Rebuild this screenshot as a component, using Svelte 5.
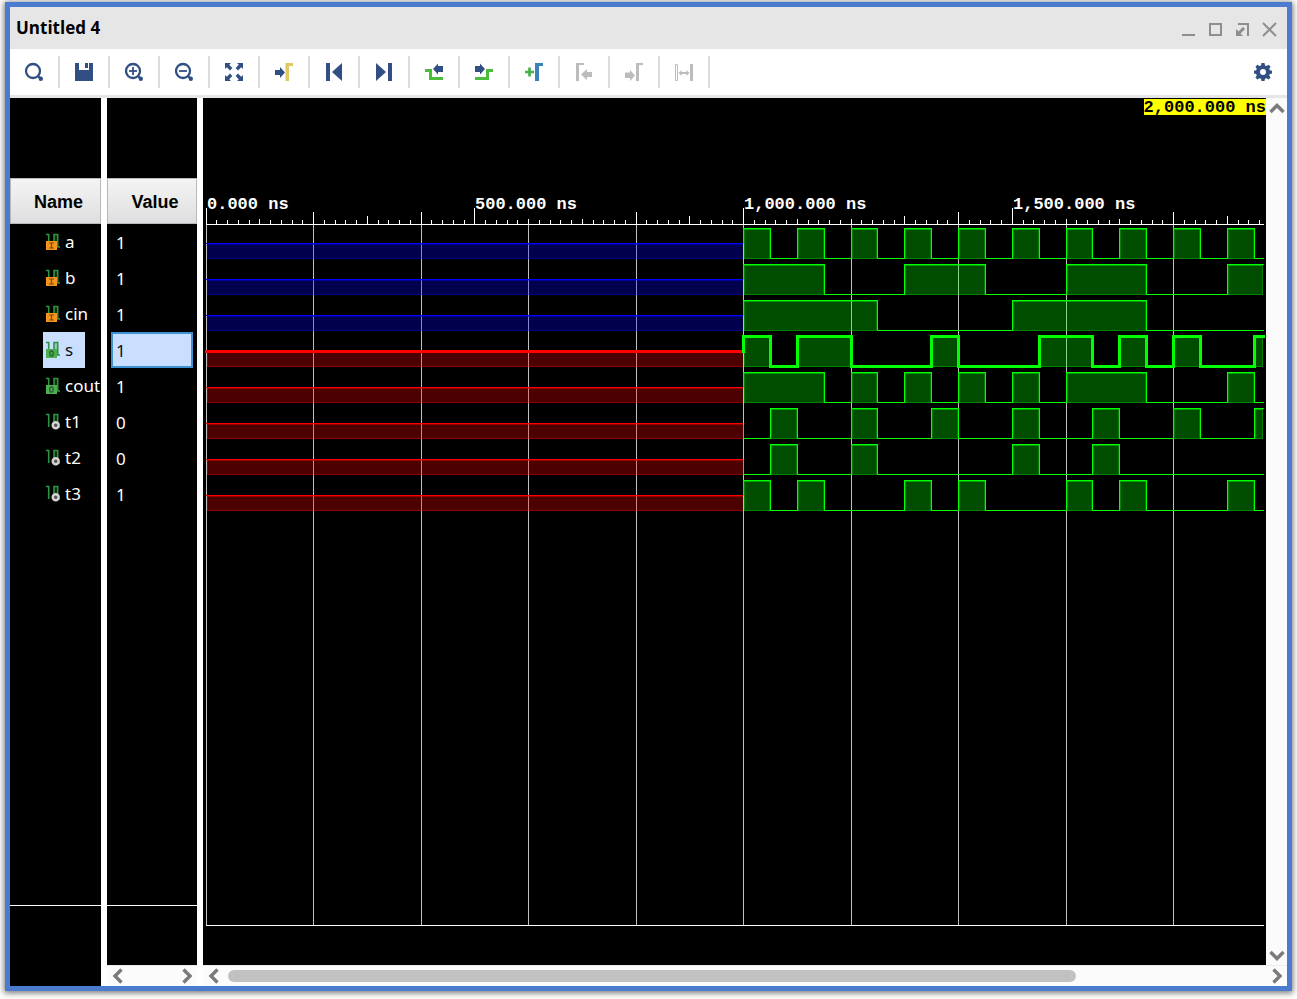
<script>
  const tools = [
    ['search', 'Search'],
    ['save', 'Save waveform'],
    ['zoomin', 'Zoom in'],
    ['zoomout', 'Zoom out'],
    ['fit', 'Zoom fit'],
    ['cursor', 'Go to cursor'],
    ['first', 'Go to time 0'],
    ['last', 'Go to last time'],
    ['prev', 'Previous transition'],
    ['next', 'Next transition'],
    ['marker', 'Add marker'],
    ['prevmark', 'Previous marker'],
    ['nextmark', 'Next marker'],
    ['swap', 'Swap cursors'],
  ];
  const disabled = ['prevmark', 'nextmark', 'swap'];

  // "highs" lists the [from, to) slots, 50 ns each, counted from 1,000 ns
  const signals = [
    { name: 'a', value: 1, kind: 'in', start: 'z', highs: [[0, 1], [2, 3], [4, 5], [6, 7], [8, 9], [10, 11], [12, 13], [14, 15], [16, 17], [18, 19]] },
    { name: 'b', value: 1, kind: 'in', start: 'z', highs: [[0, 3], [6, 9], [12, 15], [18, 20]] },
    { name: 'cin', value: 1, kind: 'in', start: 'z', highs: [[0, 5], [10, 15]] },
    { name: 's', value: 1, kind: 'out', start: 'x', highs: [[0, 1], [2, 4], [7, 8], [11, 13], [14, 15], [16, 17], [19, 20]] },
    { name: 'cout', value: 1, kind: 'out', start: 'x', highs: [[0, 3], [4, 5], [6, 7], [8, 9], [10, 11], [12, 15], [18, 19]] },
    { name: 't1', value: 0, kind: 'net', start: 'x', highs: [[1, 2], [4, 5], [7, 8], [10, 11], [13, 14], [16, 17], [19, 20]] },
    { name: 't2', value: 0, kind: 'net', start: 'x', highs: [[1, 2], [4, 5], [10, 11], [13, 14]] },
    { name: 't3', value: 1, kind: 'net', start: 'x', highs: [[0, 1], [2, 3], [6, 7], [8, 9], [12, 13], [14, 15], [18, 19]] },
  ];

  let selected = $state('s');
  let width = $state(1063);

  const ROW = 36;
  const AXIS = 126;
  const px = (ns) => 3 + Math.floor(ns * 0.5375);
  const end = $derived(width - 3);
  const lastNs = $derived((end - 3) / 0.5375);
  const range = (step) => Array.from({ length: Math.floor(lastNs / step) + 1 }, (_, i) => i * step);

  const TALL = [200, 400, 800, 1400, 1800];
  const MEDIUM = [300, 900, 1300, 1900];
  function tickHeight(ns) {
    if (ns % 500 === 0) return 16;
    if (TALL.includes(ns)) return 12;
    if (MEDIUM.includes(ns)) return 8;
    return 5;
  }

  function trace(highs, top) {
    const low = top + 34;
    const high = top + 4;
    let d = `M${px(1000)} ${top + 19}V${highs[0][0] === 0 ? high : low}`;
    for (const [from, to] of highs) {
      const x1 = px(1000 + from * 50);
      const x2 = px(1000 + to * 50);
      if (x1 > end) break;
      if (from > 0) d += `H${x1}V${high}`;
      if (x2 > end) return d + `H${end}`;
      d += `H${x2}V${low}`;
    }
    return d + `H${end}`;
  }

  const boxes = (highs) =>
    highs
      .map(([from, to]) => [px(1000 + from * 50) + 1, Math.min(px(1000 + to * 50), end)])
      .filter(([x1, x2]) => x2 > x1)
      .map(([x1, x2]) => ({ x: x1, w: x2 - x1 }));
</script>

{#snippet icon(name)}
  <svg width="20" height="20" viewBox="0 0 20 20" fill="none" aria-hidden="true">
    {#if name === 'search' || name === 'zoomin' || name === 'zoomout'}
      <circle cx="9" cy="9" r="7" stroke="#324f84" stroke-width="2.300" />
      <path d="M14 14l2 2" stroke="#324f84" stroke-width="2.400" />
      <circle cx="16.800" cy="16.800" r="2.200" fill="#324f84" />
      {#if name !== 'search'}<path d="M5 9h8" stroke="#324f84" stroke-width="1.800" />{/if}
      {#if name === 'zoomin'}<path d="M9 5v8" stroke="#324f84" stroke-width="1.800" />{/if}
    {:else if name === 'save'}
      <path d="M1 1h4v7h10V1h4v18H1zM11 1h3v5h-3z" fill="#324f84" />
    {:else if name === 'fit'}
      <path d="M1 1h6L5.200 2.800 8.400 6 6 8.400 2.800 5.200 1 7zM19 1v6l-1.800-1.800L14 8.400 11.600 6l3.200-3.200L13 1zM1 19v-6l1.800 1.800L6 11.600 8.400 14l-3.200 3.200L7 19zM19 19h-6l1.800-1.800-3.200-3.200 2.400-2.400 3.200 3.200L19 13z" fill="#324f84" />
    {:else if name === 'cursor'}
      <path d="M1 8h5V5l5 5.500L6 16v-3H1z" fill="#324f84" />
      <path d="M11.500 1H19v3h-4v15h-3.500z" fill="#e0c862" />
    {:else if name === 'first'}
      <path d="M2 1h4v18H2zM18 1v18L8 10z" fill="#324f84" />
    {:else if name === 'last'}
      <path d="M14 1h4v18h-4zM2 1v18l10-9z" fill="#324f84" />
    {:else if name === 'prev'}
      <path d="M1 8.500h5.500v8H19" stroke="#4cbc3c" stroke-width="3" />
      <path d="M19 4h-5V1.500L9 7l5 5.500V10h5z" fill="#324f84" />
    {:else if name === 'next'}
      <path d="M1 16.500h12.500v-8H19" stroke="#4cbc3c" stroke-width="3" />
      <path d="M1 4h5V1.500L11 7l-5 5.500V10H1z" fill="#324f84" />
    {:else if name === 'marker'}
      <path d="M1 10h9M5.500 5.500v9" stroke="#42ad49" stroke-width="2.600" />
      <path d="M11 1h8v3h-4v15h-4z" fill="#3983b5" />
    {:else if name === 'prevmark'}
      <path d="M2 1h8v2H5v16H2zM18 10h-5V7l-6 5.500 6 5.500v-3h5z" fill="#bcbcbc" />
    {:else if name === 'nextmark'}
      <path d="M12 1h7v2h-4v16h-3zM1 10.500h5V8l5 5.500L6 19v-3H1z" fill="#bcbcbc" />
    {:else if name === 'swap'}
      <path d="M1.500 2.500h2v16h-2z" stroke="#bcbcbc" />
      <path d="M16 2h3v17h-3zM4.500 11l3-3v2h5V8l3 3-3 3v-2h-5v2z" fill="#bcbcbc" />
    {:else if name === 'gear'}
      <path fill-rule="evenodd" d="M8.500 1h3l.5 2.500 1.500.6L15.600 2.700l2 2-1.400 2.100.6 1.500 2.200.4v2.800l-2.200.5-.6 1.500 1.400 2.100-2 2-2.100-1.400-1.500.6L11.500 19h-3L8 16.800l-1.500-.6-2.100 1.400-2-2 1.400-2.100-.6-1.500L1 11.500V8.700l2.200-.4.6-1.500L2.400 4.700l2-2 2.100 1.400L8 3.500zM10 7a3 3 0 1 0 0 6 3 3 0 0 0 0-6z" fill="#324f84" />
    {/if}
  </svg>
{/snippet}

{#snippet kindIcon(kind)}
  <svg width="16" height="18" viewBox="0 0 16 18" fill="none" aria-hidden="true">
    <path d="M9 2h4v12H9z" fill="#2c9440" fill-opacity=".3" />
    <path d="M1 1.500h2.700V14M9 14V1.500h3.700V14H15" stroke="#2c9440" stroke-width="1.600" />
    {#if kind === 'net'}
      <circle cx="10.700" cy="12.300" r="3" stroke="#d4d4d4" stroke-width="2.400" fill="#555" />
    {:else}
      <path d="M1 8h11v9H1z" fill={kind === 'in' ? '#f7941d' : '#4cae4f'} />
      {#if kind === 'in'}
        <path d="M4 10h5M4 15h5M6.500 10v5" stroke="#704a1c" stroke-width="1.200" />
      {:else}
        <ellipse cx="6.500" cy="12.500" rx="1.700" ry="2.600" stroke="#245c2b" stroke-width="1.200" />
      {/if}
    {/if}
  </svg>
{/snippet}

{#snippet chevron(dir)}
  <svg width="16" height="16" viewBox="0 0 16 16" fill="none" stroke="#7a7a7a" stroke-width="3.400" aria-hidden="true">
    {#if dir === 'left'}<path d="M11.500 1.500L5 8l6.500 6.500" />
    {:else if dir === 'right'}<path d="M4.500 1.500L11 8l-6.500 6.500" />
    {:else if dir === 'up'}<path d="M1.500 11L8 4.500l6.500 6.500" />
    {:else}<path d="M1.500 5L8 11.500 14.500 5" />{/if}
  </svg>
{/snippet}

<main class="window">
  <header class="titlebar">
    <h1>Untitled 4</h1>
    <div class="controls">
      <button aria-label="Minimize"><svg width="15" height="15" fill="none" stroke="#8e8e8e" stroke-width="2"><path d="M1 13h13" /></svg></button>
      <button aria-label="Maximize"><svg width="15" height="15" fill="none" stroke="#8e8e8e" stroke-width="2"><path d="M2 2h11v11H2z" /></svg></button>
      <button aria-label="Float"><svg width="15" height="15" fill="none" stroke="#8e8e8e" stroke-width="2"><path d="M3 2h10v12" /><path d="M9 6l-5 5" stroke-width="3" /><path d="M1 7v7h7z" fill="#8e8e8e" stroke="none" /></svg></button>
      <button aria-label="Close"><svg width="15" height="15" fill="none" stroke="#8e8e8e" stroke-width="2"><path d="M1 1l13 13M14 1L1 14" /></svg></button>
    </div>
  </header>

  <div class="toolbar">
    {#each tools as [id, label]}
      <button class="tool" aria-label={label} title={label} disabled={disabled.includes(id)}>{@render icon(id)}</button>
    {/each}
    <button class="settings" aria-label="Settings">{@render icon('gear')}</button>
  </div>

  <div class="panes">
    <section class="pane names">
      <table>
        <thead><tr><th>Name</th></tr></thead>
        <tbody>
          {#each signals as s}
            <tr>
              <td>
                <button class="signal" class:selected={selected === s.name} onclick={() => (selected = s.name)}>
                  {@render kindIcon(s.kind)}<span>{s.name}</span>
                </button>
              </td>
            </tr>
          {/each}
        </tbody>
      </table>
      <div class="foot tall"></div>
    </section>

    <section class="pane values">
      <table>
        <thead><tr><th>Value</th></tr></thead>
        <tbody>
          {#each signals as s}
            <tr><td><div class="value" class:selected={selected === s.name}>{s.value}</div></td></tr>
          {/each}
        </tbody>
      </table>
      <div class="foot"></div>
      <div class="hscroll">
        <button aria-label="Scroll values left">{@render chevron('left')}</button>
        <span class="track"></span>
        <button aria-label="Scroll values right">{@render chevron('right')}</button>
      </div>
    </section>

    <section class="waves">
      <div class="view">
        <div class="canvas" bind:clientWidth={width}>
          <svg width="100%" height="828" shape-rendering="crispEdges" role="img" aria-label="Signal waveforms">
            {#each range(200) as ns}
              <rect x={px(ns)} y={AXIS} width="1" height="701" fill="#c0c0c0" />
            {/each}
            {#each range(20) as ns}
              <rect x={px(ns)} y={AXIS - 4} width="1" height="4" fill="#fff" />
            {/each}
            {#each range(100) as ns}
              <rect x={px(ns)} y={AXIS - tickHeight(ns)} width="1" height={tickHeight(ns)} fill="#fff" />
            {/each}
            <rect x="3" y={AXIS} width={end - 2} height="1" fill="#fff" />
            <rect x="3" y="827" width={end - 2} height="1" fill="#fff" />

            {#each signals as s, i}
              {@const top = AXIS + i * ROW}
              {@const tone = s.start === 'z' ? '#00f' : '#f00'}
              {@const bold = selected === s.name}
              <rect x="4" y={top + 19} width="536" height="16" fill={tone} fill-opacity=".3" />
              <rect x="4" y={top + 20} width="536" height="1" fill={tone} fill-opacity=".4" />
              <path d={`M4.500 ${top + 20}v14.500H540`} stroke={tone} stroke-opacity=".35" fill="none" />
              <rect x={bold ? 2 : 3} y={bold ? top + 18 : top + 19} width={bold ? 538 : 537} height={bold ? 3 : 1} fill={tone} />
              {#each boxes(s.highs) as b}
                <rect x={b.x} y={top + 5} width={b.w} height="30" fill="#0f0" fill-opacity=".3" />
                <rect x={b.x + 0.5} y={top + 5.5} width={b.w - 1} height="29" fill="none" stroke="#0f0" stroke-opacity=".3" />
                <rect x={b.x} y={top + 5} width={b.w} height="1" fill="#0f0" fill-opacity=".25" />
              {/each}
              <path d={trace(s.highs, top)} transform="translate(.5 .5)" stroke="#0f0" stroke-width={bold ? 3 : 1} stroke-linecap="square" fill="none" />
            {/each}
            {#each range(500) as ns}
              <text x={px(ns) + 1} y={AXIS - 15}>{ns.toLocaleString('en-US')}.000 ns</text>
            {/each}
          </svg>
          <span class="cursor">2,000.000 ns</span>
        </div>
        <div class="vscroll">
          <button aria-label="Scroll up">{@render chevron('up')}</button>
          <button aria-label="Scroll down">{@render chevron('down')}</button>
        </div>
      </div>
      <div class="hscroll">
        <button aria-label="Scroll left">{@render chevron('left')}</button>
        <span class="track"><span class="thumb"></span></span>
        <button aria-label="Scroll right">{@render chevron('right')}</button>
      </div>
    </section>
  </div>
</main>

<style>
  :global(body) {
    background: #fff;
  }
  :global(#app) {
    box-sizing: border-box;
    height: 100vh;
    padding: 2px 5px 8px;
  }
  * {
    box-sizing: border-box;
  }
  button {
    display: flex;
    align-items: center;
    justify-content: center;
    padding: 0;
    border: 0;
    background: none;
    font: inherit;
    color: inherit;
  }
  svg {
    display: block;
    flex: none;
  }
  .window {
    display: flex;
    flex-direction: column;
    height: 100%;
    border: 5px solid #4a7bce;
    background: #fff;
    box-shadow: 0 1px 6px 1px #777;
    font-family: "Noto Sans", sans-serif;
  }
  .titlebar {
    display: flex;
    flex: none;
    align-items: center;
    justify-content: space-between;
    height: 42px;
    padding: 0 10px 0 6px;
    background: #e6e6e6;
  }
  h1 {
    margin: 0;
    font: 700 17px/24px "Open Sans", sans-serif;
    color: #000;
  }
  .controls {
    display: flex;
    gap: 12px;
    padding-top: 3px;
  }
  .toolbar {
    display: flex;
    flex: none;
    height: 49px;
    border-bottom: 3px solid #e6e6e6;
  }
  .tool {
    width: 50px;
    height: 32px;
    margin-top: 7px;
    border-right: 2px solid #dcdcdc;
  }
  .settings {
    width: 48px;
    margin-left: auto;
  }
  .panes {
    display: flex;
    flex: 1;
    gap: 6px;
    min-height: 0;
  }
  .pane {
    display: flex;
    flex: none;
    flex-direction: column;
    width: 90px;
    padding-top: 80px;
    overflow: hidden;
    background: #000;
    color: #fff;
  }
  .names {
    width: 91px;
  }
  table {
    width: 100%;
    border-spacing: 0;
    table-layout: fixed;
    font-size: 17px;
    line-height: 24px;
  }
  th {
    height: 46px;
    padding: 2px 0 0 6px;
    border: 1px solid #b8b8b8;
    background: linear-gradient(#f4f4f4, #dedee0);
    color: #000;
    font: 700 18px/24px "Liberation Sans", sans-serif;
  }
  td {
    height: 36px;
    padding: 0;
  }
  .signal {
    gap: 4px;
    height: 36px;
    margin-left: 33px;
    padding: 0 12px 0 2px;
    white-space: nowrap;
  }
  .signal.selected {
    background: #cadeff;
    color: #111;
  }
  .value {
    height: 36px;
    margin: 0 4px;
    padding: 7px 5px 0;
    line-height: 24px;
  }
  .value.selected {
    padding: 5px 3px 0;
    border: 2px solid #3f92d2;
    background: #cadeff;
    color: #111;
  }
  .foot {
    flex: none;
    height: 60px;
    margin-top: auto;
    border-top: 1px solid #fff;
  }
  .tall {
    height: 81px;
  }
  .waves {
    display: flex;
    flex: 1;
    flex-direction: column;
    min-width: 0;
  }
  .view {
    display: flex;
    flex: 1;
    min-height: 0;
  }
  .canvas {
    position: relative;
    flex: 1;
    min-width: 0;
    overflow: hidden;
    background: #000;
  }
  text {
    fill: #fff;
    font: 700 17px "Liberation Mono", monospace;
  }
  .cursor {
    position: absolute;
    top: 1px;
    right: 0;
    padding-top: 2px;
    background: #ff0;
    color: #000;
    font: 700 17px/14px "Liberation Mono", monospace;
  }
  .vscroll {
    display: flex;
    flex: none;
    flex-direction: column;
    justify-content: space-between;
    width: 21px;
    background: #fbfbfb;
  }
  .vscroll button {
    height: 21px;
  }
  .hscroll {
    display: flex;
    flex: none;
    align-items: center;
    height: 21px;
    border-top: 1px solid #ececec;
    background: #fbfbfb;
  }
  .hscroll button {
    width: 21px;
  }
  .track {
    flex: 1;
    padding: 0 4px;
  }
  .thumb {
    display: block;
    width: 82%;
    height: 12px;
    border-radius: 6px;
    background: #c1c1c1;
  }
</style>
